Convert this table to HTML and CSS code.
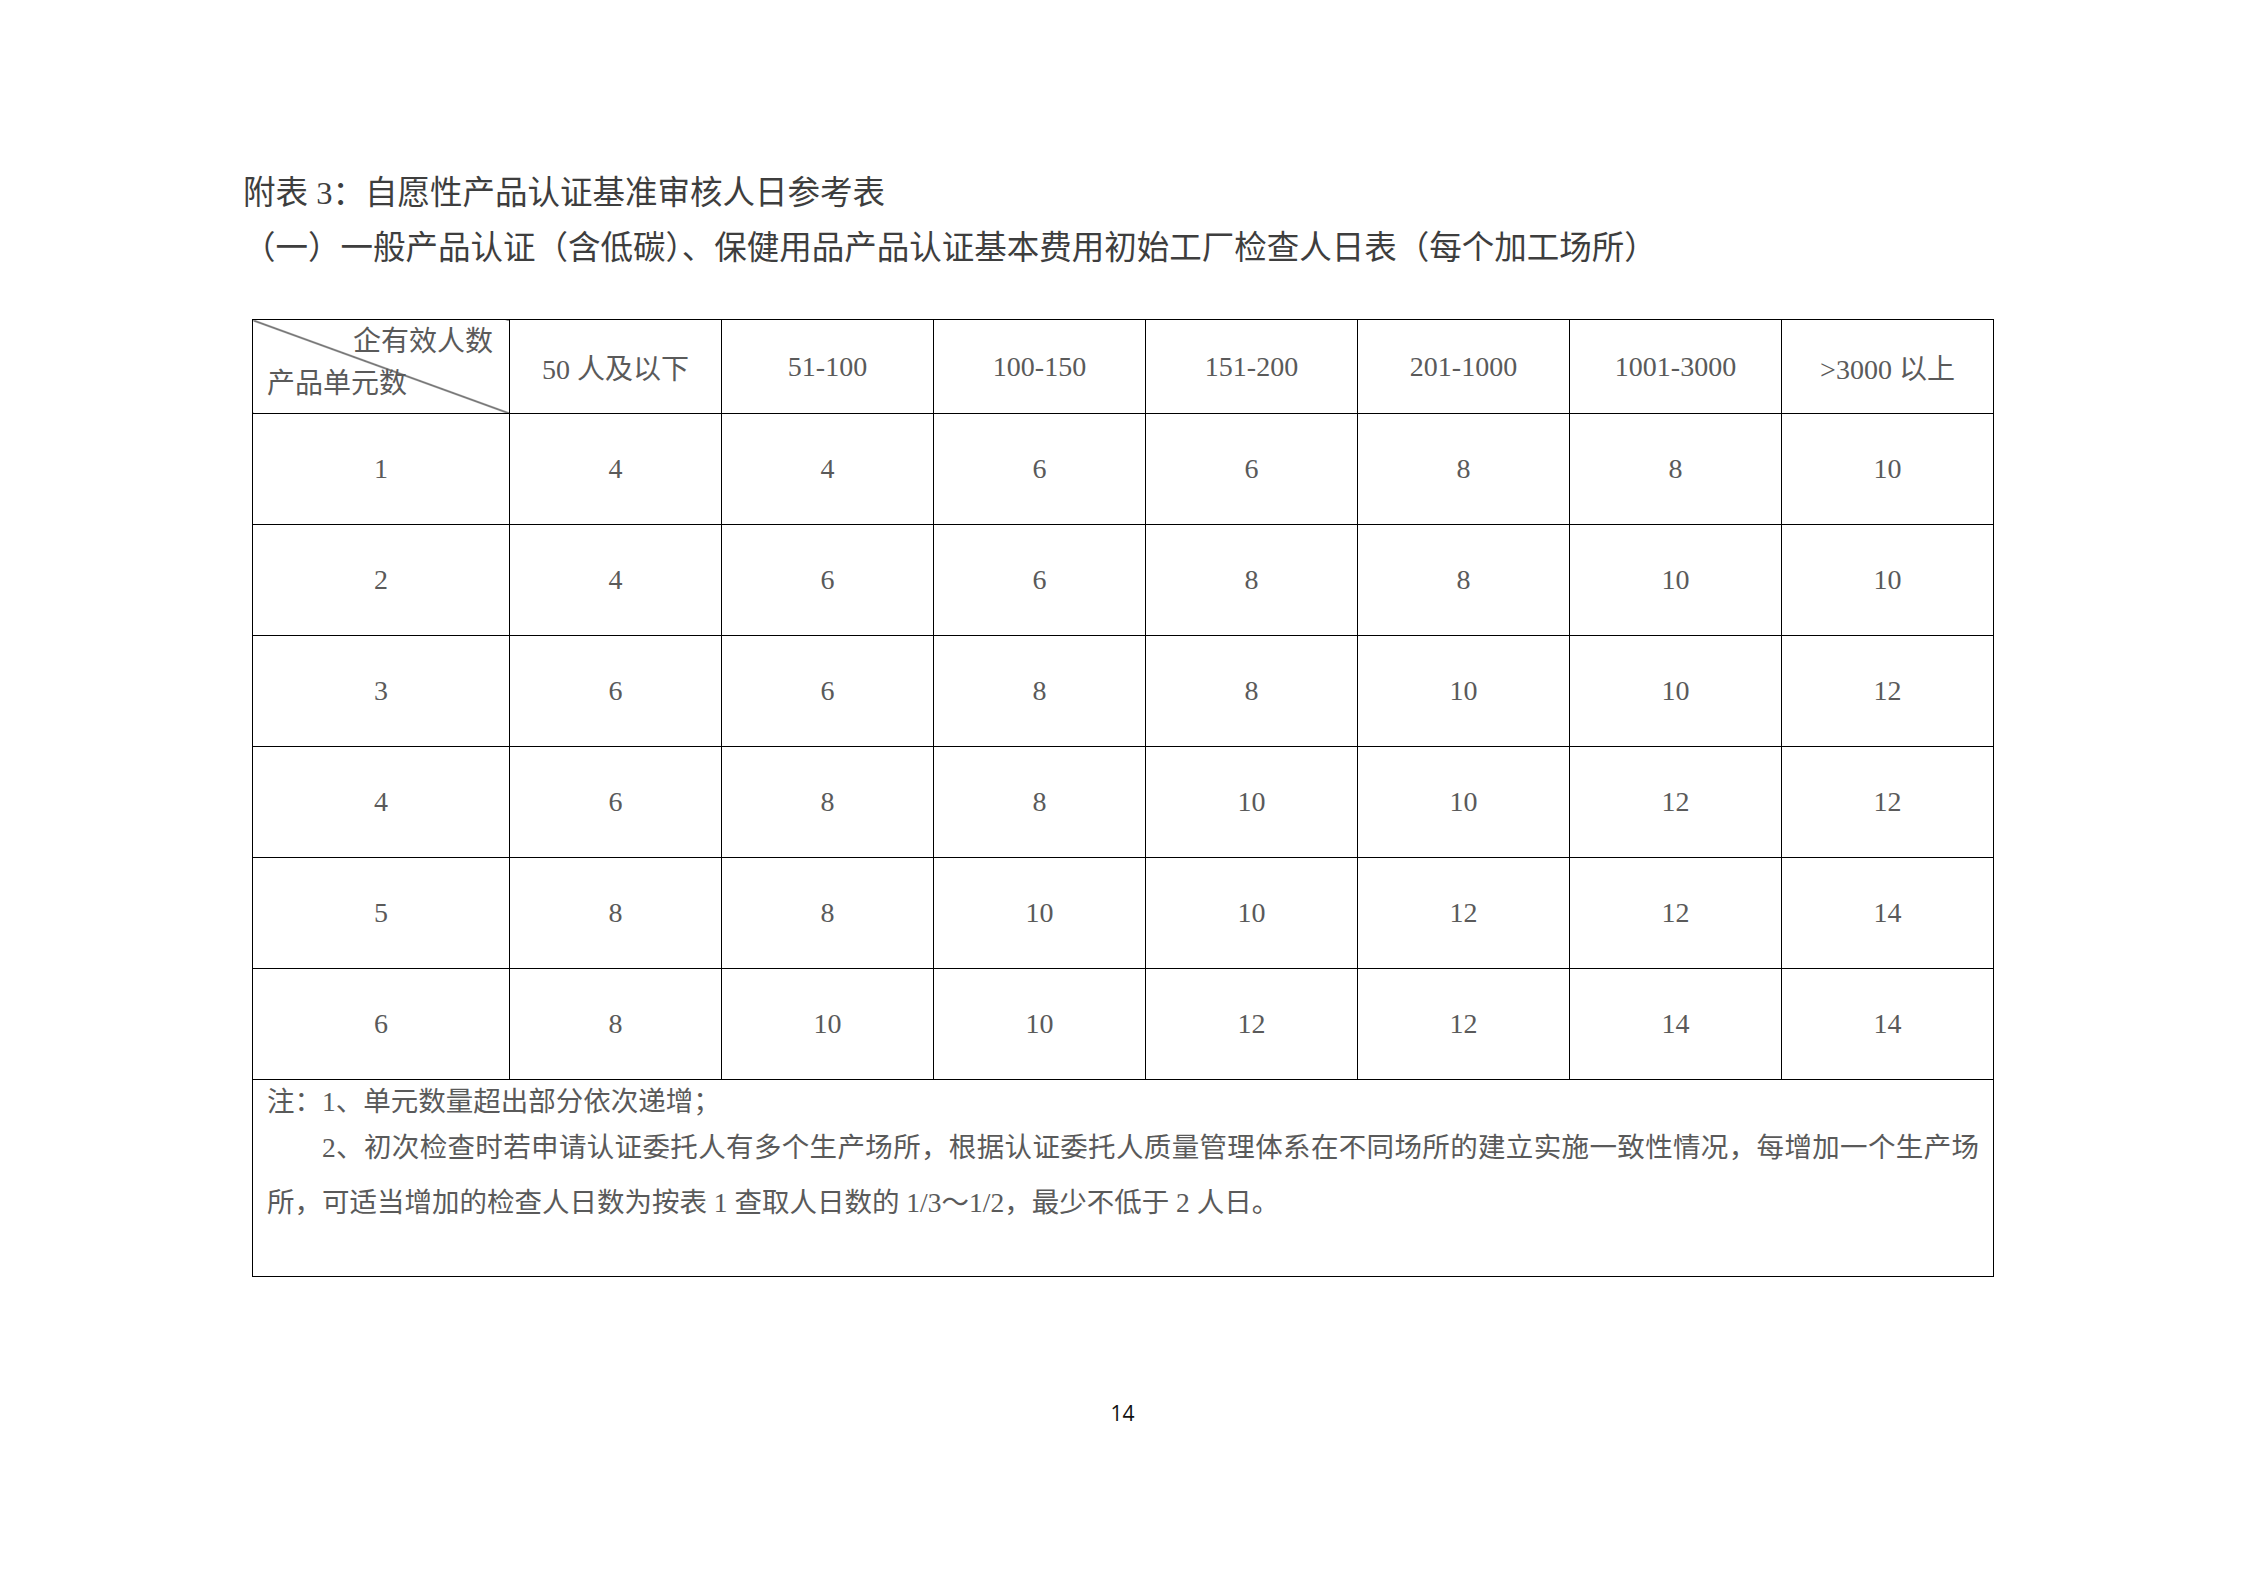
FILE: index.html
```html
<!DOCTYPE html>
<html lang="zh-CN">
<head>
<meta charset="utf-8">
<title>附表 3：自愿性产品认证基准审核人日参考表</title>
<link rel="stylesheet" href="styles.css">
</head>
<body>
<div class="page">
  <h1 class="title">附表 3：自愿性产品认证基准审核人日参考表</h1>
  <h2 class="subtitle">（一）一般产品认证（含低碳）、保健用品产品认证基本费用初始工厂检查人日表（每个加工场所）</h2>
  <table class="grid">
    <colgroup>
      <col class="col-first">
      <col class="col-n"><col class="col-n"><col class="col-n"><col class="col-n"><col class="col-n"><col class="col-n"><col class="col-n">
    </colgroup>
    <tr class="row-head">
      <th class="corner">
        <div class="corner-top">企有效人数</div>
        <div class="corner-bottom">产品单元数</div>
      </th>
      <th>50 人及以下</th>
      <th>51-100</th>
      <th>100-150</th>
      <th>151-200</th>
      <th>201-1000</th>
      <th>1001-3000</th>
      <th>&gt;3000 以上</th>
    </tr>
    <tr class="row-data"><td>1</td><td>4</td><td>4</td><td>6</td><td>6</td><td>8</td><td>8</td><td>10</td></tr>
    <tr class="row-data"><td>2</td><td>4</td><td>6</td><td>6</td><td>8</td><td>8</td><td>10</td><td>10</td></tr>
    <tr class="row-data"><td>3</td><td>6</td><td>6</td><td>8</td><td>8</td><td>10</td><td>10</td><td>12</td></tr>
    <tr class="row-data"><td>4</td><td>6</td><td>8</td><td>8</td><td>10</td><td>10</td><td>12</td><td>12</td></tr>
    <tr class="row-data"><td>5</td><td>8</td><td>8</td><td>10</td><td>10</td><td>12</td><td>12</td><td>14</td></tr>
    <tr class="row-data"><td>6</td><td>8</td><td>10</td><td>10</td><td>12</td><td>12</td><td>14</td><td>14</td></tr>
    <tr class="row-note">
      <td colspan="8" class="note">
        <p class="note-1">注：1、单元数量超出部分依次递增；</p>
        <p class="note-2">2、初次检查时若申请认证委托人有多个生产场所，根据认证委托人质量管理体系在不同场所的建立实施一致性情况，每增加一个生产场所，可适当增加的检查人日数为按表 1 查取人日数的 1/3～1/2，最少不低于 2 人日。</p>
      </td>
    </tr>
  </table>
  <div class="page-num">14</div>
</div>
</body>
</html>
```
FILE: styles.css
```css
html, body {
  margin: 0;
  padding: 0;
  background: #ffffff;
}

body {
  width: 2245px;
  height: 1587px;
  overflow: hidden;
  font-family: "Liberation Serif", "Noto Sans CJK SC", serif;
  color: #555555;
}

.page {
  padding: 166px 0 0 243px;
  box-sizing: border-box;
  width: 2245px;
}

.title {
  margin: 0;
  font-size: 32.5px;
  line-height: 55px;
  font-weight: normal;
  color: #3e3e3e;
  white-space: nowrap;
}

.subtitle {
  margin: 0;
  font-size: 32.5px;
  line-height: 55px;
  font-weight: normal;
  color: #3e3e3e;
  white-space: nowrap;
}

.grid {
  margin: 43px 0 0 9px;
  border-collapse: collapse;
  table-layout: fixed;
  width: 1741px;
  font-size: 28px;
  color: #5a5a5a;
}

.col-first { width: 257px; }
.col-n { width: 212px; }

.grid th,
.grid td {
  border: 1px solid #000000;
  padding: 0;
  text-align: center;
  vertical-align: middle;
  font-weight: normal;
}

.row-head { height: 94px; }
.row-data { height: 111px; }
.row-note { height: 197px; }

.corner {
  background: linear-gradient(to bottom left,
    transparent calc(50% - 1px),
    #000000 50%,
    transparent calc(50% + 1px));
}

.grid th.corner {
  padding: 4px 16px 0 14px;
  vertical-align: top;
}

.corner-top {
  text-align: right;
  line-height: 36px;
}

.corner-bottom {
  text-align: left;
  line-height: 36px;
  margin-top: 6px;
}

.grid td.note {
  vertical-align: top;
  text-align: justify;
  padding: 4px 14px 0 14px;
  font-size: 27.5px;
}

.note p {
  margin: 0;
}

.note-1 {
  line-height: 36px;
}

.note-2 {
  line-height: 55px;
  margin-top: -9px;
  text-indent: 2em;
}

.page-num {
  margin: 121px 0 0 -243px;
  width: 2245px;
  text-align: center;
  font-family: "Open Sans", "Liberation Sans", sans-serif;
  font-size: 21px;
  line-height: 30px;
  color: #111111;
}
```
